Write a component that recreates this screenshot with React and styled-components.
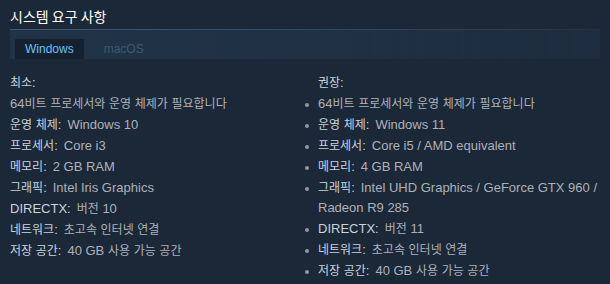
import React from "react";
import styled, { createGlobalStyle } from "styled-components";

const GlobalStyle = createGlobalStyle`
  html, body {
    margin: 0;
    padding: 0;
    background: #1b2838;
  }
  body {
    font-family: "Liberation Sans", "Noto Sans CJK KR", Arial, sans-serif;
  }
`;

const Section = styled.div`
  width: 610px;
  height: 284px;
  box-sizing: border-box;
  padding: 6px 10px 0 10px;
  overflow: hidden;
  background: #1b2838;
`;

const Title = styled.h2`
  margin: 0;
  height: 23px;
  font-family: "Noto Sans CJK KR", "Liberation Sans", sans-serif;
  font-size: 14px;
  font-weight: 400;
  line-height: 21px;
  color: #ffffff;
`;

const TabBar = styled.div`
  display: flex;
  align-items: flex-end;
  height: 29px;
  padding: 0 5px;
  background: linear-gradient(to right, #213447 0%, #1f3043 60%, rgba(31, 48, 67, 0.6) 100%);
  border-image: linear-gradient(to right, #3d5970 0%, #2e4558 70%, rgba(46, 69, 88, 0.2) 100%) 1;
  border-style: solid;
  border-width: 1px 0 0 0;
`;

const Tab = styled.div`
  height: 20px;
  padding: 0 10px;
  margin-right: 10px;
  font-size: 12px;
  line-height: 20px;
  color: ${(p) => (p.$active ? "#67c1f5" : "#3b5a72")};
  background: ${(p) => (p.$active ? "#162130" : "transparent")};
`;

const Columns = styled.div`
  display: grid;
  grid-template-columns: 294px 1fr;
  padding-top: 14px;
`;

const List = styled.ul`
  margin: 0;
  padding: 0 0 0 ${(p) => (p.$bullets ? "14px" : "0")};
  list-style: none;
  font-size: 13px;
  line-height: 20px;
  color: #acb2b8;
`;

const Item = styled.li`
  position: relative;
  margin-bottom: 1px;

  &::before {
    content: "";
    display: ${(p) => (p.$bullet ? "block" : "none")};
    position: absolute;
    left: -13px;
    top: 9px;
    width: 4px;
    height: 4px;
    border-radius: 50%;
    background: #8f98a0;
  }
`;

const Heading = styled.div`
  font-size: 13px;
  line-height: 20px;
  margin-bottom: 1px;
  color: #c6d4df;
  padding-left: ${(p) => (p.$indent ? "14px" : "0")};
`;

const Label = styled.strong`
  font-weight: 400;
  color: #c6d4df;
  margin-right: 6px;
`;

// hangul runs are set a size smaller so they keep the narrow width of the original
const Hangul = styled.span`
  font-family: "Noto Sans CJK KR", sans-serif;
  font-size: 12px;
  line-height: 1;
`;

function ko(text) {
  return text.split(/([\uac00-\ud7a3]+)/).map((part, i) =>
    /[\uac00-\ud7a3]/.test(part) ? <Hangul key={i}>{part}</Hangul> : part
  );
}

const minimum = [
  [null, "64비트 프로세서와 운영 체제가 필요합니다"],
  ["운영 체제:", "Windows 10"],
  ["프로세서:", "Core i3"],
  ["메모리:", "2 GB RAM"],
  ["그래픽:", "Intel Iris Graphics"],
  ["DIRECTX:", "버전 10"],
  ["네트워크:", "초고속 인터넷 연결"],
  ["저장 공간:", "40 GB 사용 가능 공간"],
];

const recommended = [
  [null, "64비트 프로세서와 운영 체제가 필요합니다"],
  ["운영 체제:", "Windows 11"],
  ["프로세서:", "Core i5 / AMD equivalent"],
  ["메모리:", "4 GB RAM"],
  ["그래픽:", "Intel UHD Graphics / GeForce GTX 960 / Radeon R9 285"],
  ["DIRECTX:", "버전 11"],
  ["네트워크:", "초고속 인터넷 연결"],
  ["저장 공간:", "40 GB 사용 가능 공간"],
];

function ReqList({ heading, items, bullets }) {
  return (
    <div>
      <Heading $indent={bullets}>{ko(heading)}</Heading>
      <List $bullets={bullets}>
        {items.map(([label, value], i) => (
          <Item key={i} $bullet={bullets}>
            {label && <Label>{ko(label)}</Label>}
            {ko(value)}
          </Item>
        ))}
      </List>
    </div>
  );
}

export default function App() {
  return (
    <>
      <GlobalStyle />
      <Section>
        <Title>시스템 요구 사항</Title>
        <TabBar>
          <Tab $active>Windows</Tab>
          <Tab>macOS</Tab>
        </TabBar>
        <Columns>
          <ReqList heading="최소:" items={minimum} />
          <ReqList heading="권장:" items={recommended} bullets />
        </Columns>
      </Section>
    </>
  );
}
